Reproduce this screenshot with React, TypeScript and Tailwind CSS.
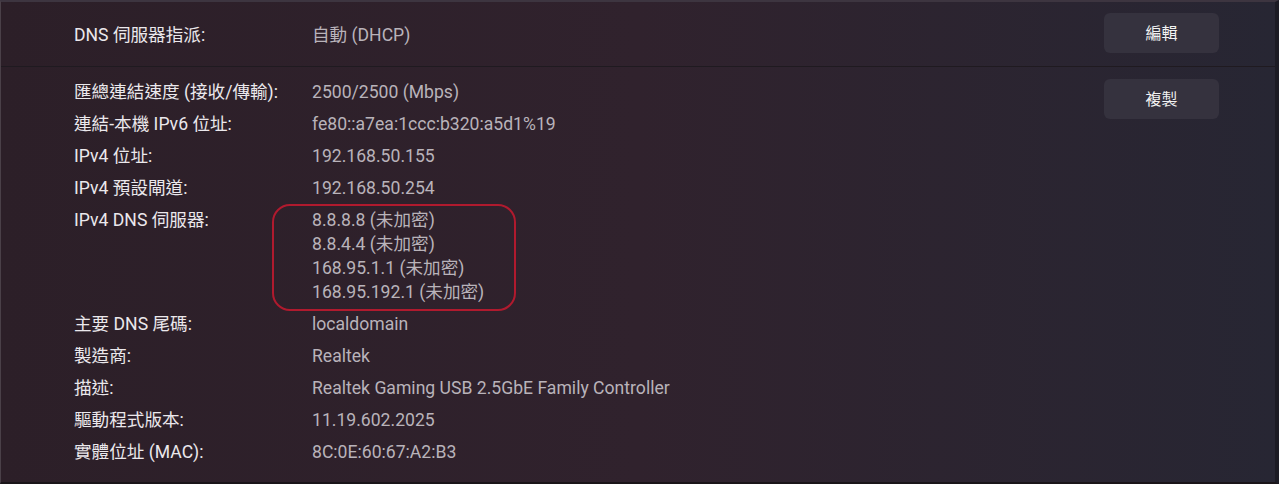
import React from 'react';

const font = { fontFamily: '"Segoe UI", Roboto, "Noto Sans CJK TC", sans-serif' };

type Row = { label: string; values: string[]; boxed?: boolean };

const rows: Row[] = [
  { label: '匯總連結速度 (接收/傳輸):', values: ['2500/2500 (Mbps)'] },
  { label: '連結-本機 IPv6 位址:', values: ['fe80::a7ea:1ccc:b320:a5d1%19'] },
  { label: 'IPv4 位址:', values: ['192.168.50.155'] },
  { label: 'IPv4 預設閘道:', values: ['192.168.50.254'] },
  {
    label: 'IPv4 DNS 伺服器:',
    values: ['8.8.8.8 (未加密)', '8.8.4.4 (未加密)', '168.95.1.1 (未加密)', '168.95.192.1 (未加密)'],
    boxed: true,
  },
  { label: '主要 DNS 尾碼:', values: ['localdomain'] },
  { label: '製造商:', values: ['Realtek'] },
  { label: '描述:', values: ['Realtek Gaming USB 2.5GbE Family Controller'] },
  { label: '驅動程式版本:', values: ['11.19.602.2025'] },
  { label: '實體位址 (MAC):', values: ['8C:0E:60:67:A2:B3'] },
];

function ActionButton({ children }: { children: React.ReactNode }) {
  return (
    <button className="w-[115px] h-[40px] rounded-md bg-[#35323e] text-[#f2f2f2] text-[16px] leading-[24px] pt-[2px] shrink-0">
      {children}
    </button>
  );
}

export default function App() {
  return (
    <div
      style={font}
      className="w-[1279px] h-[484px] overflow-hidden bg-gradient-to-r from-[#2c1f28] via-[#30222d] to-[#272633] border-t-2 border-t-[#3d3540] border-l border-l-[#4a4048] border-r-4 border-r-[#1c1b24] border-b-2 border-b-[#1a1519] text-[17.6px]"
    >
      {/* DNS assignment */}
      <div className="flex items-start justify-between h-[65px] pl-[73px] pr-[56px] border-b border-[#1f1a20]">
        <div className="flex items-center mt-[21px] leading-[24px]">
          <div className="w-[238px] text-[#ebe8ec]">DNS 伺服器指派:</div>
          <div className="text-[#b9b3ba]">自動 (DHCP)</div>
        </div>
        <div className="mt-[11px]">
          <ActionButton>編輯</ActionButton>
        </div>
      </div>

      {/* Properties */}
      <div className="flex justify-between pl-[73px] pr-[56px] pt-[9px]">
        <div className="flex flex-col">
          {rows.map((row) => (
            <div key={row.label} className="flex py-[4px] leading-[24px]">
              <div className="w-[238px] text-[#ebe8ec]">{row.label}</div>
              <div className="relative text-[#b9b3ba]">
                {row.values.map((v) => (
                  <div key={v}>{v}</div>
                ))}
                {row.boxed && (
                  <div className="absolute left-[-40px] top-[-4px] w-[244px] h-[107px] rounded-[18px] border-2 border-[#b01a2e]" />
                )}
              </div>
            </div>
          ))}
        </div>
        <div className="pt-[3px]">
          <ActionButton>複製</ActionButton>
        </div>
      </div>
    </div>
  );
}
